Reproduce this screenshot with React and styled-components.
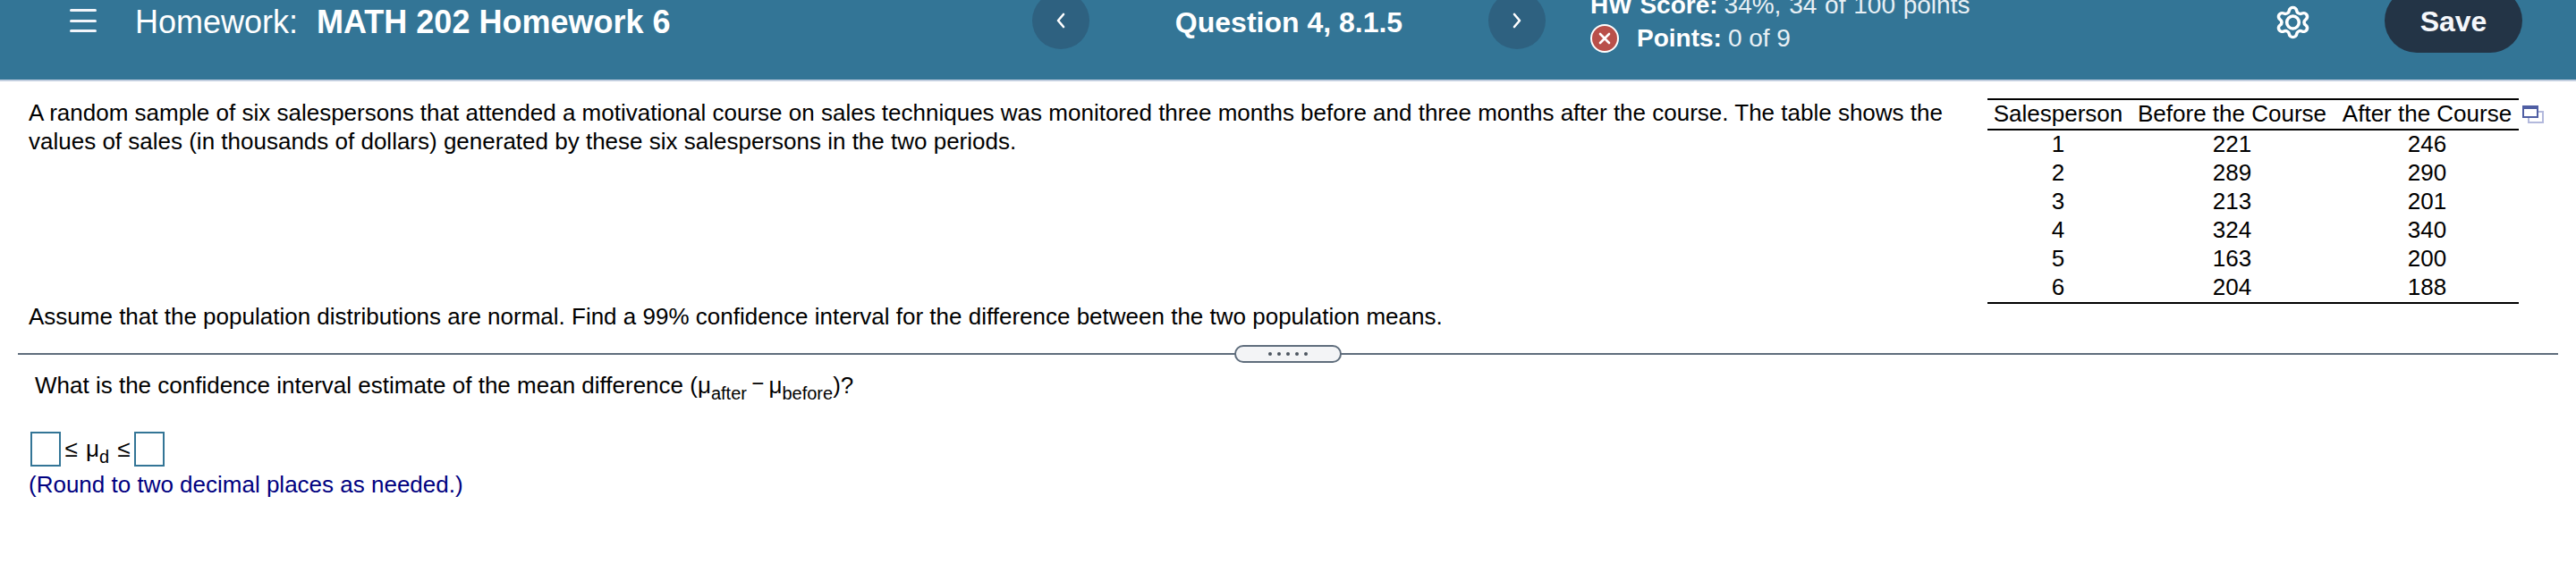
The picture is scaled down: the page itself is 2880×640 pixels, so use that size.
import React from 'react'
import styled, { createGlobalStyle } from 'styled-components'

const GlobalStyle = createGlobalStyle`
  html, body {
    margin: 0;
    padding: 0;
    background: #fff;
    font-family: "Liberation Sans", Arial, sans-serif;
    color: #000;
  }
`

const rows = [
  [1, 221, 246],
  [2, 289, 290],
  [3, 213, 201],
  [4, 324, 340],
  [5, 163, 200],
  [6, 204, 188],
]

const Chevron = ({ flip }) => (
  <svg width="14" height="18" viewBox="0 0 14 18" fill="none">
    <path
      d={flip ? 'M4 2 L10 9 L4 16' : 'M10 2 L4 9 L10 16'}
      stroke="#fff"
      strokeWidth="2.6"
      strokeLinecap="round"
      strokeLinejoin="round"
    />
  </svg>
)

const Gear = () => (
  <svg width="43" height="40" viewBox="0 0 24 24" fill="none" preserveAspectRatio="none" stroke="#fff" strokeWidth="2">
    <path d="M9.671 4.136a2.34 2.34 0 0 1 4.659 0 2.34 2.34 0 0 0 3.319 1.915 2.34 2.34 0 0 1 2.33 4.033 2.34 2.34 0 0 0 0 3.831 2.34 2.34 0 0 1-2.33 4.033 2.34 2.34 0 0 0-3.319 1.915 2.34 2.34 0 0 1-4.659 0 2.34 2.34 0 0 0-3.32-1.915 2.34 2.34 0 0 1-2.33-4.033 2.34 2.34 0 0 0 0-3.831A2.34 2.34 0 0 1 6.35 6.051a2.34 2.34 0 0 0 3.319-1.915" />
    <ellipse cx="12" cy="12" rx="3.8" ry="4.2" />
  </svg>
)

const App = () => {
  return (
    <Page>
      <GlobalStyle />
      <Header>
        <TitleArea>
          <Burger>
            <i />
            <i />
            <i />
          </Burger>
          <Title>
            Homework:<strong>MATH 202 Homework 6</strong>
          </Title>
        </TitleArea>
        <Nav>
          <RoundBtn>
            <Chevron />
          </RoundBtn>
          <QuestionName>Question 4, 8.1.5</QuestionName>
          <RoundBtn>
            <Chevron flip />
          </RoundBtn>
        </Nav>
        <Score>
          <ScoreLine $spread>
            <b>HW Score:</b> 34%, 34 of 100 points
          </ScoreLine>
          <ScoreLine>
            <WrongMark>
              <svg width="14" height="14" viewBox="0 0 14 14">
                <path d="M2 2 L12 12 M12 2 L2 12" stroke="#fff" strokeWidth="2.6" strokeLinecap="round" />
              </svg>
            </WrongMark>
            <b>Points:</b> 0 of 9
          </ScoreLine>
        </Score>
        <GearBtn>
          <Gear />
        </GearBtn>
        <SaveBtn>Save</SaveBtn>
      </Header>

      <Content>
        <Intro>
          <Prose>
            <p>
              A random sample of six salespersons that attended a motivational course on sales techniques was monitored three months before and three months after the course. The table shows the values of sales (in thousands of dollars) generated by these six salespersons in the two periods.
            </p>
            <Assume>
              Assume that the population distributions are normal. Find a 99% confidence interval for the difference between the two population means.
            </Assume>
          </Prose>
          <TableWrap>
            <DataTable>
              <thead>
                <tr>
                  <th>Salesperson</th>
                  <th>Before the Course</th>
                  <th>After the Course</th>
                </tr>
              </thead>
              <tbody>
                {rows.map((row) => (
                  <tr key={row[0]}>
                    <td>{row[0]}</td>
                    <td>{row[1]}</td>
                    <td>{row[2]}</td>
                  </tr>
                ))}
              </tbody>
            </DataTable>
            <CopyIcon width="24" height="20" viewBox="0 0 24 20" fill="none">
              <rect x="7" y="7" width="16" height="12" stroke="#b3b9dc" strokeWidth="2" fill="#fff" />
              <rect x="1" y="1" width="16" height="12" stroke="#4f5ea3" strokeWidth="2" fill="#fff" />
              <rect x="0" y="0" width="18" height="4" fill="#4f5ea3" />
            </CopyIcon>
          </TableWrap>
        </Intro>

        <Divider>
          <Pill>
            <span />
            <span />
            <span />
            <span />
            <span />
          </Pill>
        </Divider>

        <Question>
          What is the confidence interval estimate of the mean difference (μ<sub>after</sub> <Minus>−</Minus> μ<sub>before</sub>)?
        </Question>

        <AnswerRow>
          <AnswerBox />
          <Relation>≤ μ<sub>d</sub> ≤</Relation>
          <AnswerBox />
        </AnswerRow>
        <Hint>(Round to two decimal places as needed.)</Hint>
      </Content>
    </Page>
  )
}

export default App

const Page = styled.div`
  width: 2880px;
  height: 640px;
  overflow: hidden;
`
const Header = styled.header`
  height: 89px;
  background: #337596;
  border-bottom: 2px solid #c3cfe0;
  display: flex;
  align-items: flex-start;
  color: #fff;
  overflow: hidden;
`
const TitleArea = styled.div`
  width: 1154px;
  box-sizing: border-box;
  padding-left: 78px;
  display: flex;
  align-items: center;
  height: 46px;
`
const Burger = styled.div`
  width: 30px;
  height: 26px;
  margin-right: 43px;
  display: flex;
  flex-direction: column;
  justify-content: space-between;
  i {
    display: block;
    height: 3px;
    border-radius: 2px;
    background: #f2f5fa;
  }
`
const Title = styled.div`
  font-size: 36px;
  line-height: 50px;
  padding-top: 3px;
  white-space: nowrap;
  strong {
    font-weight: 700;
    margin-left: 21px;
  }
`
const Nav = styled.div`
  width: 574px;
  display: flex;
  justify-content: space-between;
  align-items: center;
  height: 46px;
`
const RoundBtn = styled.div`
  width: 64px;
  height: 64px;
  flex-shrink: 0;
  border-radius: 50%;
  background: #2e6180;
  display: flex;
  align-items: center;
  justify-content: center;
`
const QuestionName = styled.div`
  font-size: 32px;
  font-weight: 700;
  line-height: 50px;
  padding-top: 3px;
`
const Score = styled.div`
  margin-left: 50px;
  margin-top: -13px;
  flex: 1;
  font-size: 28px;
  line-height: 37px;
  white-space: nowrap;
  color: #e8f0f5;
  b {
    color: #fff;
    font-weight: 700;
  }
`
const ScoreLine = styled.div`
  display: flex;
  align-items: center;
  gap: 7px;
  word-spacing: ${(p) => (p.$spread ? '1px' : '0')};
`
const WrongMark = styled.span`
  width: 28px;
  height: 28px;
  margin-right: 13px;
  border-radius: 50%;
  background: #b9504a;
  border: 2px solid #fff;
  display: flex;
  align-items: center;
  justify-content: center;
`
const GearBtn = styled.div`
  width: 43px;
  height: 40px;
  margin-top: 5px;
`
const SaveBtn = styled.div`
  width: 154px;
  height: 72px;
  box-sizing: border-box;
  padding-top: 3px;
  margin: -13px 60px 0 81px;
  border-radius: 36px;
  background: #233446;
  color: #f5f7fb;
  font-size: 32px;
  font-weight: 700;
  display: flex;
  align-items: center;
  justify-content: center;
`
const Content = styled.main`
  padding-top: 19px;
`
const Intro = styled.section`
  display: flex;
  padding-left: 32px;
`
const Prose = styled.div`
  width: 2150px;
  margin-right: 40px;
  font-size: 26px;
  line-height: 32px;
  p {
    margin: 0;
  }
`
const Assume = styled.p`
  margin-top: 164px !important;
`
const TableWrap = styled.div`
  display: flex;
  align-items: flex-start;
`
const DataTable = styled.table`
  width: 594px;
  border-collapse: collapse;
  table-layout: fixed;
  border-top: 2px solid #000;
  border-bottom: 2px solid #000;
  font-size: 26px;
  line-height: 30px;
  th,
  td {
    padding: 0 0 2px;
    text-align: center;
    font-weight: 400;
    white-space: nowrap;
  }
  th:nth-child(1) {
    width: 158px;
  }
  th:nth-child(2) {
    width: 231px;
  }
  thead tr {
    border-bottom: 2px solid #000;
  }
`
const CopyIcon = styled.svg`
  margin: 8px 0 0 4px;
  flex-shrink: 0;
`
const Divider = styled.div`
  margin: 16px 20px 0;
  height: 20px;
  display: flex;
  align-items: center;
  justify-content: center;
  background: linear-gradient(#5f6d7c, #5f6d7c) center / 100% 2px no-repeat;
`
const Pill = styled.div`
  width: 120px;
  height: 20px;
  box-sizing: border-box;
  border: 2px solid #5f6d7c;
  border-radius: 10px;
  background: #f3f4f6;
  display: flex;
  align-items: center;
  justify-content: center;
  gap: 6px;
  span {
    width: 4px;
    height: 4px;
    border-radius: 50%;
    background: #4d5560;
  }
`
const Question = styled.p`
  margin: 9px 0 0 39px;
  font-size: 26px;
  line-height: 32px;
  sub {
    font-size: 20px;
    line-height: 0;
    vertical-align: -7px;
  }
`
const Minus = styled.span`
  font-size: 24px;
  margin: 0 -2px;
  position: relative;
  top: -3px;
`
const AnswerRow = styled.div`
  margin: 35px 0 0 34px;
  display: flex;
  align-items: center;
  height: 39px;
`
const AnswerBox = styled.div`
  width: 34px;
  height: 39px;
  box-sizing: border-box;
  border: 2px solid #337596;
  background: #fff;
`
const Relation = styled.div`
  width: 82px;
  text-align: center;
  font-size: 26px;
  word-spacing: 2px;
  sub {
    font-size: 20px;
    line-height: 0;
    vertical-align: -7px;
  }
`
const Hint = styled.p`
  margin: 4px 0 0 32px;
  font-size: 26px;
  line-height: 32px;
  color: #000080;
`
